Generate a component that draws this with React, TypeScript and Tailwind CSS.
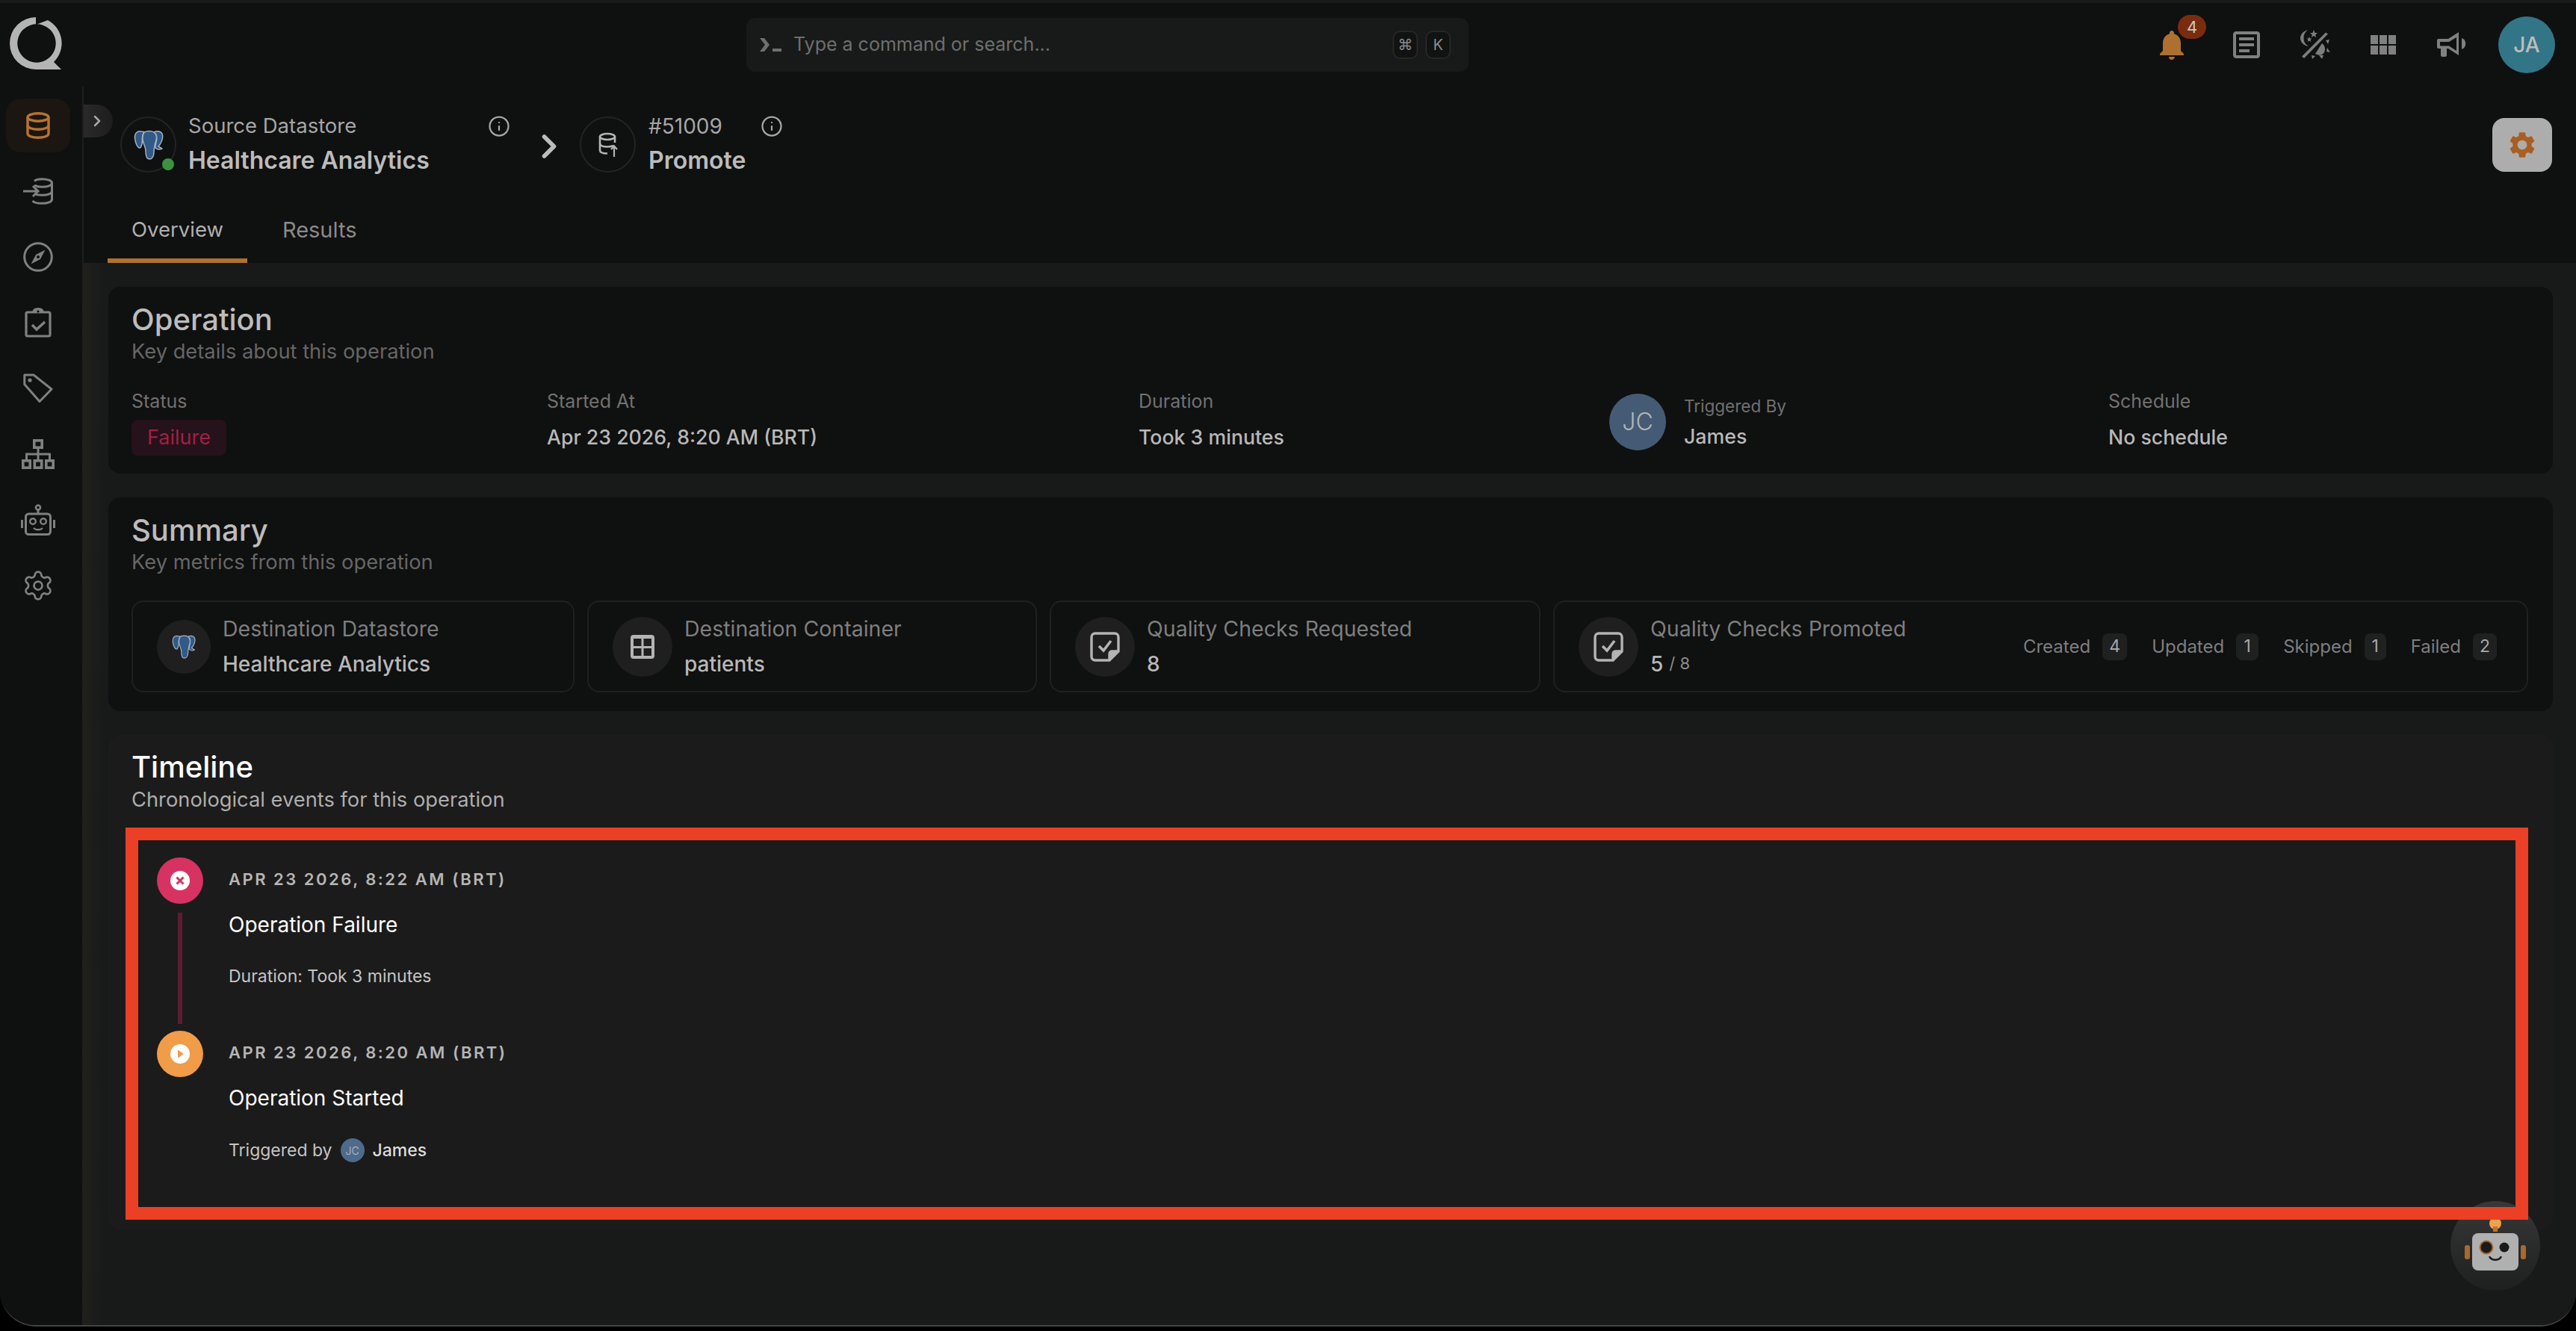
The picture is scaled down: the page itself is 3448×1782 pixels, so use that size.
import { ChevronRight, Info, Settings } from "lucide-react";
import { MdNotifications, MdOutlineArticle, MdSettings } from "react-icons/md";

const dimIcon = "#808080";

const Logo = () => (
  <svg width="100" height="100" viewBox="0 0 100 100" className="shrink-0">
    <path
      d="M48 13A35 35 0 0 0 48 83L82 83L72 73A35 35 0 0 0 64 17L50 22.3A25.7 25.7 0 1 1 48 22.3Z"
      fill="#b4b4b4"
    />
  </svg>
);

const PgElephant = ({ size = 40 }: { size?: number }) => (
  <svg width={size} height={size} viewBox="0 0 40 40" fill="#2f5a8a" stroke="#a9b2bb" strokeWidth="1.5" strokeLinejoin="round">
    <path d="M10 2C4 1 1 5 1.5 11C2 17 5 24 8 24C10 24 10 21 11 19C12 14 10 7 14 3C13 2 11 2 10 2Z" />
    <path d="M27 3C30 1 36 1 38 5C40 10 37 18 33 22L38 25C35 27 31 26 29 24C28 20 33 12 30 6C29 5 28 4 27 3Z" />
    <path d="M14 3C18 1 24 1 27 3C31 6 31 12 29 17C28 21 27 25 27 30C27 36 24 39 21 39C17 39 16 34 16 28C16 22 11 16 12 10C12 7 13 5 14 3Z" />
  </svg>
);

const DatabaseIcon = () => (
  <svg width="32" height="36" viewBox="0 0 32 36" fill="none" stroke="#b8742f" strokeWidth="3.4">
    <ellipse cx="16" cy="7" rx="14" ry="5.2" />
    <path d="M2 7V29C2 32 8 34.3 16 34.3S30 32 30 29V7" />
    <path d="M2 18C2 21 8 23.3 16 23.3S30 21 30 18" />
  </svg>
);

const DatabaseInIcon = () => (
  <svg width="40" height="36" viewBox="0 0 40 36" fill="none" stroke={dimIcon} strokeWidth="3">
    <path d="M15 4.5C17 2.5 21 1.7 25 1.7C33 1.7 38.5 4 38.5 7S33 12.3 25 12.3C21 12.3 17.5 11.5 15 10" />
    <path d="M38.5 7V29C38.5 32 33 34.3 25 34.3C19 34.3 14.5 33 12.5 31" />
    <path d="M38.5 18C38.5 21 33 23.3 25 23.3C21 23.3 17.5 22.7 15 21.5" />
    <path d="M0 18H20M13 11L20 18L13 25" />
  </svg>
);

const CompassIcon = () => (
  <svg width="40" height="40" viewBox="0 0 40 40" fill="none" stroke={dimIcon} strokeWidth="3">
    <circle cx="20" cy="20" r="18.3" />
    <path d="M29.5 10.5L23 23L10.5 29.5L17 17Z" fill={dimIcon} stroke="none" />
    <circle cx="20" cy="20" r="2" fill="#0f1010" stroke="none" />
  </svg>
);

const ClipboardIcon = () => (
  <svg width="36" height="40" viewBox="0 0 36 40" fill="none" stroke={dimIcon} strokeWidth="3.2">
    <rect x="2" y="6" width="32" height="32" rx="2" />
    <path d="M12 6C12 2 15 1.6 18 1.6S24 2 24 6" fill={dimIcon} />
    <circle cx="18" cy="5" r="1.6" fill="#0f1010" stroke="none" />
    <path d="M10 23L16 29L27 19" strokeWidth="3.6" />
  </svg>
);

const TagIcon = () => (
  <svg width="40" height="40" viewBox="0 0 40 40" fill="none" stroke={dimIcon} strokeWidth="3">
    <path d="M1.8 2V14.5L22 37.5L38 21L14 2Z" strokeLinejoin="round" />
    <circle cx="9" cy="9" r="2.6" fill={dimIcon} stroke="none" />
  </svg>
);

const SitemapIcon = () => (
  <svg width="44" height="40" viewBox="0 0 44 40" fill="none" stroke={dimIcon} strokeWidth="3.6">
    <rect x="16.8" y="1.8" width="10.4" height="9.4" />
    <rect x="1.8" y="28.8" width="9.4" height="9.4" />
    <rect x="17.3" y="28.8" width="9.4" height="9.4" />
    <rect x="32.8" y="28.8" width="9.4" height="9.4" />
    <path d="M22 11V29M6.5 29V20H37.5V29" strokeWidth="3" />
  </svg>
);

const BotIcon = () => (
  <svg width="46" height="42" viewBox="0 0 46 42" fill="none" stroke={dimIcon} strokeWidth="3">
    <circle cx="23" cy="4.5" r="3" strokeWidth="2.6" />
    <path d="M23 8V13" />
    <rect x="6.5" y="13" width="33" height="27.5" rx="4" />
    <path d="M1.5 21V32M44.5 21V32" strokeWidth="3" />
    <circle cx="16" cy="23" r="3.8" strokeWidth="2.4" />
    <circle cx="30" cy="23" r="3.8" strokeWidth="2.4" />
    <path d="M17 32C20 35 26 35 29 32" strokeWidth="2.4" />
  </svg>
);

const PromptIcon = () => (
  <svg width="29" height="20" viewBox="0 0 29 20" fill="#6f6f6f">
    <path d="M0 1H6L13 10L6 19H0L7 10Z" />
    <rect x="17" y="15" width="12" height="4" />
  </svg>
);

const SunMoonIcon = () => (
  <svg width="40" height="40" viewBox="0 0 40 40" fill="#7d7d7d">
    <path d="M10 0C3 2 0 7 0 11C0 16 4 21 11 22C6 19 4.5 15 4.5 11C4.5 7 6 3 10 0Z" />
    <path d="M18 0L19.5 4H23L20.2 6.4L21.2 10L18 8L14.8 10L15.8 6.4L13 4H16.5Z" />
    <path d="M12 9L13 11.5H15.5L13.6 13.2L14.3 16L12 14.5L9.7 16L10.4 13.2L8.5 11.5H11Z" />
    <path d="M34 3.5L37 5.5L5 38L2 35.5Z" />
    <path d="M29 18C33 21 34 26 32 30C30 34 26 35 20 32Z" />
    <path d="M34 14L39 13L37 19ZM35 29L40 30L36 24ZM29 39L31 34L25 34ZM16 39L15 34L20 35Z" />
  </svg>
);

const GridIcon = () => (
  <svg width="34" height="26" viewBox="0 0 34 26" fill="#808080">
    {[0, 12, 24].map((x) =>
      [0, 14].map((y) => <rect key={`${x}-${y}`} x={x} y={y} width="10" height="12" />)
    )}
  </svg>
);

const MegaphoneIcon = () => (
  <svg width="40" height="36" viewBox="0 0 40 36" fill="#808080">
    <path
      fillRule="evenodd"
      d="M30 1L16 10H3C1.5 10 1 11 1 12V21C1 22 2 23 3 23H6V32C6 33 7 34 8 34H12C13 34 14 33 14 32V23H16L30 32ZM5 14H17L27 8V26L17 19.5H5Z"
    />
    <path d="M34 9A8 8 0 0 1 34 24Z" />
  </svg>
);

const TableIcon = () => (
  <svg width="32" height="32" viewBox="0 0 32 32">
    <rect width="32" height="32" rx="4" fill="#b4b4b4" />
    <rect x="4" y="5" width="10.5" height="10" fill="#1f1f1f" />
    <rect x="17.5" y="5" width="10.5" height="10" fill="#1f1f1f" />
    <rect x="4" y="18" width="10.5" height="10" fill="#1f1f1f" />
    <rect x="17.5" y="18" width="10.5" height="10" fill="#1f1f1f" />
  </svg>
);

const NoteCheckIcon = () => (
  <svg width="40" height="40" viewBox="0 0 40 40" fill="none" stroke="#b4b4b4" strokeWidth="3.4">
    <path d="M26 38H7C4 38 2 36 2 33V7C2 4 4 2 7 2H33C36 2 38 4 38 7V26Z" />
    <path d="M26 38V30C26 27.5 27.5 26 30 26H38" fill="#b4b4b4" />
    <path d="M12 19L18 25L28 12" strokeWidth="3.6" />
  </svg>
);

const PromoteIcon = () => (
  <svg width="26" height="34" viewBox="0 0 26 34" fill="none" stroke="#b4b4b4" strokeWidth="2.6">
    <ellipse cx="12" cy="6" rx="10" ry="4" />
    <path d="M2 6V24C2 27 6 28.5 12 28.5M22 6V14" />
    <path d="M2 15C2 18 6 19.5 12 19.5C15 19.5 18 19 20 18" />
    <path d="M21 33V19M17 23L21 18.5L25 23" strokeWidth="2.2" />
  </svg>
);

const XBadge = () => (
  <svg width="28" height="28" viewBox="0 0 28 28">
    <circle cx="14" cy="14" r="13" fill="#fff" />
    <path d="M9.5 9.5L18.5 18.5M18.5 9.5L9.5 18.5" stroke="#d63262" strokeWidth="3" />
  </svg>
);

const PlayBadge = () => (
  <svg width="28" height="28" viewBox="0 0 28 28">
    <circle cx="14" cy="14" r="13" fill="#fff" />
    <path d="M11 8.5L19 14L11 19.5Z" fill="#f09c48" />
  </svg>
);

const RobotFab = () => (
  <div className="absolute left-[3280px] top-[1608px] w-[120px] h-[120px] rounded-full bg-gradient-to-b from-[#383838] to-[#1e1f1f]">
    <svg width="120" height="120" viewBox="0 0 120 120">
      <circle cx="60" cy="30" r="8" fill="#f0a14b" />
      <rect x="57" y="34" width="6" height="7" fill="#b8742f" />
      <rect x="29" y="43" width="62" height="50" rx="8" fill="#b0b0b0" />
      <rect x="19" y="59" width="7" height="19" rx="3" fill="#a8692c" />
      <rect x="94" y="59" width="7" height="19" rx="3" fill="#a8692c" />
      <circle cx="48" cy="62" r="8.5" fill="#1a1a1a" stroke="#a8692c" strokeWidth="2" />
      <circle cx="72" cy="62" r="6.5" fill="#1a1a1a" />
      <path d="M52.5 75C56 80 64 80 67.5 75" fill="none" stroke="#1a1a1a" strokeWidth="2.6" strokeLinecap="round" />
    </svg>
  </div>
);

const navIcons = [
  <DatabaseInIcon key="in" />,
  <CompassIcon key="compass" />,
  <ClipboardIcon key="clip" />,
  <TagIcon key="tag" />,
  <SitemapIcon key="map" />,
  <BotIcon key="bot" />,
  <Settings key="settings" size={44} strokeWidth={1.5} color={dimIcon} />,
];

const Sidebar = () => (
  <aside className="w-[112px] shrink-0 bg-[#0f1010] border-r-2 border-[#1f1f1f] flex flex-col items-center pt-[16px]">
    <div className="w-[86px] h-[72px] rounded-[20px] bg-[#1b1612] flex items-center justify-center -ml-[8px]">
      <DatabaseIcon />
    </div>
    <div className="mt-[8px] flex flex-col">
      {navIcons.map((icon, i) => (
        <div key={i} className="w-[86px] h-[88px] flex items-center justify-center -ml-[8px]">
          {icon}
        </div>
      ))}
    </div>
  </aside>
);

const TopBar = () => (
  <>
    <div className="h-[4px] bg-[#171a19]" />
    <header className="h-[112px] shrink-0 bg-[#0f1010] flex items-start relative">
      <div className="mt-[6px]">
        <Logo />
      </div>
      <div className="ml-[899px] mt-[20px] w-[967px] h-[72px] rounded-[12px] bg-[#171a19] flex items-center pl-[18px] pr-[24px]">
        <PromptIcon />
        <span className="ml-[16px] text-[25px] text-[#6f6f6f]">Type a command or search...</span>
        <span className="ml-auto w-[34px] h-[38px] rounded-[10px] border-2 border-[#262626] bg-[#111212] flex items-center justify-center text-[20px] text-[#8a8a8a] font-['DejaVu_Sans',sans-serif]">
          ⌘
        </span>
        <span className="ml-[10px] w-[34px] h-[38px] rounded-[10px] border-2 border-[#262626] bg-[#111212] flex items-center justify-center text-[20px] text-[#8a8a8a]">
          K
        </span>
      </div>
      <div className="ml-auto mr-[28px] mt-[18px] flex items-center">
        <div className="relative w-[48px] h-[76px] flex items-center justify-center">
          <MdNotifications size={54} color="#ad7030" />
          <span className="absolute left-[32px] top-[-2px] w-[38px] h-[32px] rounded-full bg-[#7a2c10] text-[#c8c8c8] text-[22px] flex items-center justify-center">
            4
          </span>
        </div>
        <div className="ml-[52px]"><MdOutlineArticle size={48} color="#808080" /></div>
        <div className="ml-[48px]"><SunMoonIcon /></div>
        <div className="ml-[54px]"><GridIcon /></div>
        <div className="ml-[54px]"><MegaphoneIcon /></div>
        <div className="ml-[43px] w-[76px] h-[76px] rounded-full bg-[#327587] text-[#bdbdbd] text-[28px] font-medium flex items-center justify-center">
          JA
        </div>
      </div>
    </header>
  </>
);

const PageHeader = () => (
  <div className="h-[236px] shrink-0 bg-[#0f1010] relative flex flex-col">
    <div className="absolute left-0 top-[24px] w-[39px] h-[44px] rounded-r-[22px] bg-gradient-to-r from-[#2a2a2a] to-[#1d1d1d] flex items-center justify-start pl-[6px]">
      <ChevronRight size={24} color="#a8a8a8" strokeWidth={2.5} />
    </div>
    <div className="h-[150px] flex items-start pt-[40px] pl-[49px] pr-[32px]">
      <div className="relative w-[75px] h-[75px] rounded-full border-2 border-[#232323] flex items-center justify-center shrink-0">
        <PgElephant size={40} />
        <span className="absolute right-[1px] bottom-[1px] w-[16px] h-[16px] rounded-full bg-[#3f9142]" />
      </div>
      <div className="ml-[16px] w-[431px] shrink-0">
        <div className="h-[26px] flex items-center justify-between">
          <span className="text-[27.5px] text-[#a6a6a6] leading-none">Source Datastore</span>
          <Info size={30} color="#a6a6a6" strokeWidth={1.8} />
        </div>
        <div className="mt-[13px] h-[40px] flex items-center text-[32px] font-semibold text-[#bcbcbc]">Healthcare Analytics</div>
      </div>
      <ChevronRight size={52} color="#bcbcbc" strokeWidth={2.6} className="ml-[26px] mt-[14px] shrink-0" />
      <div className="ml-[15px] w-[75px] h-[75px] rounded-full border-2 border-[#232323] flex items-center justify-center shrink-0">
        <PromoteIcon />
      </div>
      <div className="ml-[17px] w-[180px] shrink-0">
        <div className="h-[26px] flex items-center justify-between">
          <span className="text-[28px] text-[#a6a6a6] leading-none">#51009</span>
          <Info size={30} color="#a6a6a6" strokeWidth={1.8} />
        </div>
        <div className="mt-[13px] h-[40px] flex items-center text-[32px] font-semibold text-[#bcbcbc]">Promote</div>
      </div>
      <button className="ml-auto mt-[2px] w-[80px] h-[72px] rounded-[16px] bg-[#adadad] flex items-center justify-center">
        <MdSettings size={42} color="#a85f22" />
      </button>
    </div>
    <div className="h-[86px] flex items-stretch pl-[32px]">
      <div className="pt-[3px] px-[32px] flex items-center border-b-[6px] border-[#b0722f] text-[27.5px] text-[#b0b0b0]">Overview</div>
      <div className="pt-[3px] ml-[15px] px-[32px] flex items-center border-b-[6px] border-transparent text-[29px] text-[#8a8a8a]">Results</div>
    </div>
  </div>
);

const Label = ({ children, small = false }: { children: React.ReactNode; small?: boolean }) => (
  <div className={`h-[30px] flex items-center text-[#717171] ${small ? "text-[22.5px]" : "text-[25px]"}`}>{children}</div>
);

const Value = ({ children }: { children: React.ReactNode }) => (
  <div className="mt-[10px] h-[44px] flex items-center text-[26.7px] font-medium text-[#b8b8b8]">{children}</div>
);

const CardTitle = ({ title, sub }: { title: string; sub: string }) => (
  <>
    <h2 className="h-[44px] flex items-center text-[40px] font-medium text-[#bcbcbc]">{title}</h2>
    <p className="mt-[3px] h-[36px] flex items-center text-[27.3px] text-[#666]">{sub}</p>
  </>
);

const OperationCard = () => (
  <section className="h-[250px] shrink-0 rounded-[16px] bg-[#0f1010] pt-[22px] pl-[31px]">
    <CardTitle title="Operation" sub="Key details about this operation" />
    <div className="mt-[34px] flex">
      <div className="w-[556px]">
        <Label>Status</Label>
        <div className="mt-[9px] w-[127px] h-[48px] rounded-[8px] bg-[#25121a] flex items-center justify-center text-[27px] text-[#a02048]">
          Failure
        </div>
      </div>
      <div className="w-[792px]">
        <Label>Started At</Label>
        <Value>Apr 23 2026, 8:20 AM (BRT)</Value>
      </div>
      <div className="w-[630px]">
        <Label>Duration</Label>
        <Value>Took 3 minutes</Value>
      </div>
      <div className="w-[668px] flex items-start">
        <div className="mt-[4px] w-[76px] h-[76px] rounded-full bg-[#455b75] text-[#b4b4b4] text-[32px] font-light flex items-center justify-center">
          JC
        </div>
        <div className="ml-[24px] mt-[6px]">
          <Label small>Triggered By</Label>
          <div className="mt-[3px] h-[44px] flex items-center text-[26.7px] font-medium text-[#b8b8b8]">James</div>
        </div>
      </div>
      <div>
        <Label>Schedule</Label>
        <Value>No schedule</Value>
      </div>
    </div>
  </section>
);

const Metric = ({
  width,
  icon,
  circle,
  label,
  trailing,
  children,
}: {
  width: string;
  icon: React.ReactNode;
  circle: string;
  label: string;
  trailing?: React.ReactNode;
  children: React.ReactNode;
}) => (
  <div className={`${width} h-[123px] shrink-0 rounded-[16px] border-2 border-[#1f2020] flex items-center pl-[32px] pr-[40px]`}>
    <div className={`${circle} rounded-full bg-[#1f1f1f] flex items-center justify-center shrink-0`}>{icon}</div>
    <div className="ml-[16px]">
      <div className="h-[32px] flex items-center text-[28.5px] text-[#7e7e7e]">{label}</div>
      <div className="mt-[14px] h-[32px] flex items-center text-[28px] font-medium text-[#b8b8b8]">{children}</div>
    </div>
    {trailing}
  </div>
);

const counts: [string, string, string][] = [
  ["Created", "4", "w-[33px]"],
  ["Updated", "1", "w-[30px]"],
  ["Skipped", "1", "w-[29px]"],
  ["Failed", "2", "w-[32px]"],
];

const ChipRow = () => (
  <div className="ml-auto flex items-center gap-[33px]">
    {counts.map(([name, n, w]) => (
      <div key={name} className="flex items-center gap-[16px]">
        <span className="text-[24px] text-[#7e7e7e]">{name}</span>
        <span className={`${w} h-[36px] rounded-[8px] bg-[#1f2020] flex items-center justify-center text-[23px] text-[#a8a8a8]`}>{n}</span>
      </div>
    ))}
  </div>
);

const SummaryCard = () => (
  <section className="mt-[32px] h-[286px] shrink-0 rounded-[16px] bg-[#0f1010] pt-[22px] pl-[31px]">
    <CardTitle title="Summary" sub="Key metrics from this operation" />
    <div className="mt-[33px] flex gap-[17px]">
      <Metric width="w-[593px]" circle="w-[72px] h-[72px]" icon={<PgElephant size={32} />} label="Destination Datastore">
        Healthcare Analytics
      </Metric>
      <Metric width="w-[602px]" circle="w-[80px] h-[80px]" icon={<TableIcon />} label="Destination Container">
        patients
      </Metric>
      <Metric width="w-[657px]" circle="w-[80px] h-[80px]" icon={<NoteCheckIcon />} label="Quality Checks Requested">
        8
      </Metric>
      <Metric
        width="w-[1305px]"
        circle="w-[80px] h-[80px]"
        icon={<NoteCheckIcon />}
        label="Quality Checks Promoted"
        trailing={<ChipRow />}
      >
        <span>5</span>
        <span className="ml-[8px] text-[22px] font-normal text-[#8a8a8a]">/ 8</span>
      </Metric>
    </div>
  </section>
);

const TimelineCard = () => (
  <section className="mt-[32px] h-[662px] shrink-0 rounded-[16px] bg-[#1b1b1b] pt-[21px]">
    <div className="pl-[31px]">
      <h2 className="h-[44px] flex items-center text-[40px] font-medium text-white">Timeline</h2>
      <p className="mt-[4px] h-[36px] flex items-center text-[27.3px] text-[#adadad]">Chronological events for this operation</p>
    </div>
    <div className="relative z-10 mt-[19px] ml-[23px] w-[3216px] h-[525px] border-[17px] border-[#eb4026] pt-[23px] pl-[25px]">
      <div className="flex h-[232px]">
        <div className="w-[62px] flex flex-col items-center shrink-0">
          <div className="w-[62px] h-[62px] rounded-full bg-[#d63262] flex items-center justify-center"><XBadge /></div>
          <div className="mt-[12px] w-[6px] h-[149px] bg-[#5e1c34]" />
        </div>
        <div className="ml-[34px]">
          <div className="mt-[14px] h-[30px] flex items-center text-[22px] font-semibold tracking-[2.5px] text-[#b5b5b5]">APR 23 2026, 8:22 AM (BRT)</div>
          <div className="mt-[28px] h-[36px] flex items-center text-[28px] text-white">Operation Failure</div>
          <div className="mt-[35px] h-[32px] flex items-center text-[23px] text-[#c4c4c4]">Duration: Took 3 minutes</div>
        </div>
      </div>
      <div className="flex">
        <div className="w-[62px] h-[62px] rounded-full bg-[#f09c48] flex items-center justify-center shrink-0"><PlayBadge /></div>
        <div className="ml-[34px]">
          <div className="mt-[14px] h-[30px] flex items-center text-[22px] font-semibold tracking-[2.5px] text-[#b5b5b5]">APR 23 2026, 8:20 AM (BRT)</div>
          <div className="mt-[28px] h-[36px] flex items-center text-[28px] text-white">Operation Started</div>
          <div className="mt-[36px] h-[32px] flex items-center text-[23px] text-[#c4c4c4]">
            Triggered by
            <span className="ml-[11px] w-[32px] h-[32px] rounded-full bg-[#4f6b8c] text-[#c0c0c0] text-[14px] font-light flex items-center justify-center">JC</span>
            <span className="ml-[11px] font-medium text-[#dcdcdc]">James</span>
          </div>
        </div>
      </div>
    </div>
  </section>
);

export default function App() {
  return (
    <div className="relative w-[3448px] h-[1782px] overflow-hidden bg-black font-['Inter',sans-serif]">
      <div className="h-[1776px] rounded-b-[48px] border-b-2 border-[#444] overflow-hidden flex flex-col bg-[#171a19]">
        <TopBar />
        <div className="flex flex-1 min-h-0">
          <Sidebar />
          <main className="flex-1 min-w-0 flex flex-col bg-[linear-gradient(90deg,#201f1c,#171a19_30px)]">
            <PageHeader />
            <div className="pl-[33px] pr-[31px] pt-[32px] flex flex-col">
              <OperationCard />
              <SummaryCard />
              <TimelineCard />
            </div>
          </main>
        </div>
      </div>
      <RobotFab />
    </div>
  );
}
